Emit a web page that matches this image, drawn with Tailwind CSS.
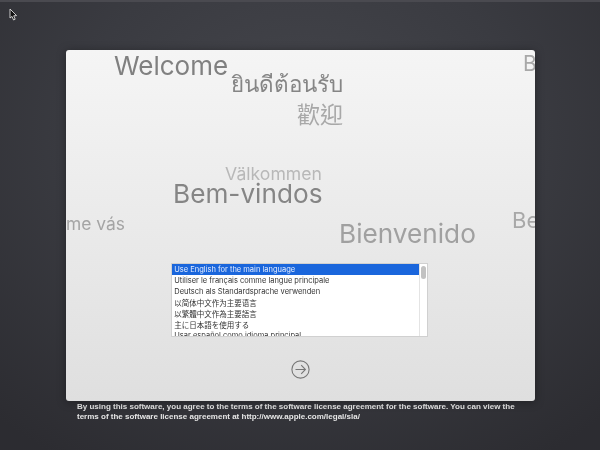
<!DOCTYPE html>
<html>
<head>
<meta charset="utf-8">
<script src="https://cdn.jsdelivr.net/npm/@tailwindcss/browser@4"></script>
</head>
<body class="m-0">
<div class="relative w-[600px] h-[450px] overflow-hidden blur-[0.35px] bg-[radial-gradient(ellipse_75%_85%_at_50%_30%,#45464c_0%,#3a3b41_50%,#2c2c31_100%)] font-['Liberation_Sans',sans-serif]">
  <div class="h-[2px] bg-[#4a4a50]"></div>
  <svg class="absolute left-[9px] top-[8px]" width="9" height="13" viewBox="0 0 9 13"><path d="M1 1 L1 10 L3 8.4 L4.6 12 L6.2 11.2 L4.7 7.8 L7.6 7.6 Z" fill="#111" stroke="#ddd" stroke-width="0.9"/></svg>

  <main class="ml-[66px] mt-[48px] w-[468.5px] h-[351px] relative overflow-hidden rounded-[3px] bg-[linear-gradient(#f5f5f5,#dfdfdf)] shadow-[0_1px_10px_rgba(0,0,0,0.35)] flex flex-col items-center">
    <span class="absolute left-[48px] top-[-2px] text-[26px] leading-[36px] text-[#808080] font-['Inter',sans-serif] whitespace-nowrap">Welcome</span>
    <span class="absolute left-[165px] top-[17px] text-[22.4px] leading-[34px] text-[#858585] font-['Noto_Sans','DejaVu_Sans',sans-serif] whitespace-nowrap">ยินดีต้อนรับ</span>
    <span class="absolute left-[231px] top-[48px] text-[23px] leading-[30px] text-[#a8a8a8] font-['Noto_Sans_CJK_TC',sans-serif] whitespace-nowrap">歡迎</span>
    <span class="absolute left-[457px] top-[1px] text-[21px] leading-[26px] text-[#a8a8a8] font-['Inter',sans-serif] whitespace-nowrap">B</span>
    <span class="absolute left-[159px] top-[112px] text-[17.6px] leading-[24px] text-[#b8b8b8] font-['Inter',sans-serif] whitespace-nowrap">Välkommen</span>
    <span class="absolute left-[107px] top-[127px] text-[26.2px] leading-[34px] text-[#858585] font-['Inter',sans-serif] whitespace-nowrap">Bem-vindos</span>
    <span class="absolute left-[0px] top-[161px] text-[17.4px] leading-[26px] text-[#a4a4a4] font-['Inter',sans-serif] whitespace-nowrap">me vás</span>
    <span class="absolute left-[273px] top-[167px] text-[26.2px] leading-[34px] text-[#a0a0a0] font-['Inter',sans-serif] whitespace-nowrap">Bienvenido</span>
    <span class="absolute left-[446px] top-[156px] text-[22px] leading-[28px] text-[#a8a8a8] font-['Inter',sans-serif] whitespace-nowrap">Be</span>

    <div class="mt-[213px] ml-[-1px] w-[257px] h-[74px] flex bg-white border border-[#d0d0d0] overflow-hidden text-[7.5px] leading-[11px] text-[#333] font-['Inter','Noto_Sans_CJK_SC',sans-serif]">
      <ul class="flex-1">
        <li class="h-[11px] pl-[2px] bg-[#1a66dc] text-[#e6eeff]">Use English for the main language</li>
        <li class="h-[11px] pl-[2px]">Utiliser le français comme langue principale</li>
        <li class="h-[11px] pl-[2px]">Deutsch als Standardsprache verwenden</li>
        <li class="h-[11px] pl-[2px] font-['Noto_Sans_CJK_SC',sans-serif]">以简体中文作为主要语言</li>
        <li class="h-[11px] pl-[2px] font-['Noto_Sans_CJK_TC',sans-serif]">以繁體中文作為主要語言</li>
        <li class="h-[11px] pl-[2px] font-['Noto_Sans_CJK_JP',sans-serif]">主に日本語を使用する</li>
        <li class="h-[11px] pl-[2px]">Usar español como idioma principal</li>
      </ul>
      <div class="w-[8px] border-l border-[#e4e4e4] pt-[2px] pl-[1px]">
        <div class="w-[5px] h-[13px] rounded-[3px] bg-[#c2c2c2]"></div>
      </div>
    </div>

    <svg class="mt-[23px]" width="19" height="19" viewBox="0 0 19 19" fill="none" stroke="#777" stroke-width="1.1"><circle cx="9.5" cy="9.5" r="8.6"/><path d="M4.5 9.5 H14.3 M10.2 5.2 L14.4 9.5 L10.2 13.8"/></svg>
  </main>

  <p class="ml-[77px] mt-px w-[445px] text-[8px] leading-[10px] font-bold text-[#e6e6e6]">By using this software, you agree to the terms of the software license agreement for the software. You can view the terms of the software license agreement at http://www.apple.com/legal/sla/</p>
</div>
</body>
</html>
